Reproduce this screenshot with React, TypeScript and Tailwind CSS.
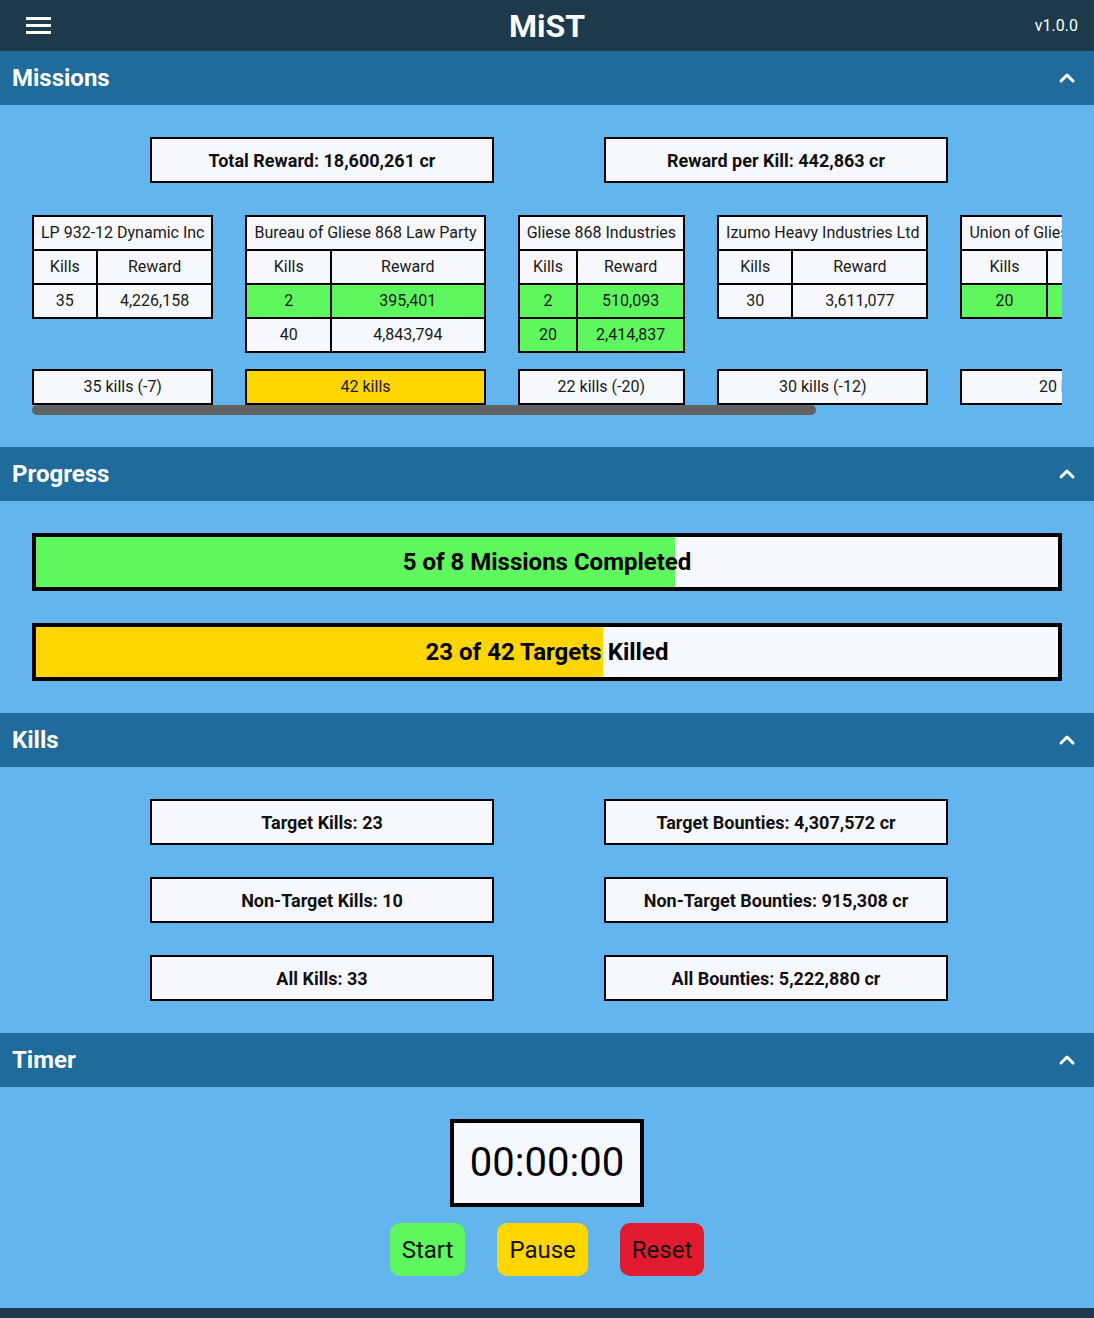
import { ChevronUp } from 'lucide-react';

type Mission = { kills: number; reward: string };
type Faction = { name: string; missions: Mission[] };

const CURRENT_KILLS = 23;
const MAX_KILLS = 42;

const factions: Faction[] = [
  { name: 'LP 932-12 Dynamic Inc', missions: [{ kills: 35, reward: '4,226,158' }] },
  {
    name: 'Bureau of Gliese 868 Law Party',
    missions: [
      { kills: 2, reward: '395,401' },
      { kills: 40, reward: '4,843,794' },
    ],
  },
  {
    name: 'Gliese 868 Industries',
    missions: [
      { kills: 2, reward: '510,093' },
      { kills: 20, reward: '2,414,837' },
    ],
  },
  { name: 'Izumo Heavy Industries Ltd', missions: [{ kills: 30, reward: '3,611,077' }] },
  { name: 'Union of Gliese 868 Progressive', missions: [{ kills: 20, reward: '1,840,112' }] },
  { name: 'Gliese 868 Crimson Inc', missions: [{ kills: 15, reward: '758,789' }] },
];

function SectionHeader({ title }: { title: string }) {
  return (
    <div className="h-[54px] bg-[#1e6b9c] flex items-center justify-between pl-3 pr-[15px]">
      <h2 className="text-[24px] font-bold text-white">{title}</h2>
      <ChevronUp className="w-6 h-6 text-white" strokeWidth={3} />
    </div>
  );
}

function StatBox({ children }: { children: React.ReactNode }) {
  return (
    <div className="w-[344px] h-[46px] border-2 border-black bg-[#f7f8fe] flex items-center justify-center text-[18px] font-bold text-[#111]">
      {children}
    </div>
  );
}

function FactionColumn({ faction }: { faction: Faction }) {
  const total = faction.missions.reduce((s, m) => s + m.kills, 0);
  let running = 0;
  const isMax = total === MAX_KILLS;
  return (
    <div className="flex flex-col shrink-0">
      <table className="border-collapse bg-[#f7f8fe] text-[16px] text-[#1a1a1a] mb-4">
        <thead>
          <tr>
            <th colSpan={2} className="border-2 border-black px-[7px] py-1 font-normal whitespace-nowrap">
              {faction.name}
            </th>
          </tr>
          <tr>
            <th className="border-2 border-black px-2 py-1 font-normal">Kills</th>
            <th className="border-2 border-black px-2 py-1 font-normal">Reward</th>
          </tr>
        </thead>
        <tbody>
          {faction.missions.map((m, i) => {
            running += m.kills;
            const done = running <= CURRENT_KILLS;
            return (
              <tr key={i} className={done ? 'bg-[#5ef75e]' : ''}>
                <td className="border-2 border-black px-2 py-1 text-center">{m.kills}</td>
                <td className="border-2 border-black px-2 py-1 text-center">{m.reward}</td>
              </tr>
            );
          })}
        </tbody>
      </table>
      <div
        className={
          'mt-auto h-9 border-2 border-black flex items-center justify-center text-[16px] text-[#1a1a1a] whitespace-nowrap ' +
          (isMax ? 'bg-[#ffd600]' : 'bg-[#f7f8fe]')
        }
      >
        {isMax ? `${total} kills` : `${total} kills (${total - MAX_KILLS})`}
      </div>
    </div>
  );
}

function ProgressBar({ value, max, label, color }: { value: number; max: number; label: string; color: string }) {
  const pct = (value / max) * 100;
  return (
    <div className="relative h-[58px] border-4 border-black bg-[#f7f8fe]">
      <div className={'h-full ' + color} style={{ width: `${pct}%` }} />
      <div className="absolute inset-0 flex items-center justify-center text-[24px] font-bold text-black">
        {label}
      </div>
    </div>
  );
}

export default function App() {
  return (
    <div className="min-h-screen bg-[#63b5ed] font-['Roboto',sans-serif]">
      {/* Top bar */}
      <nav className="h-[51px] bg-[#1d3a4a] flex items-center justify-between px-[26px] relative">
        <div className="flex flex-col gap-[4px] w-[25px]">
          <span className="h-[3px] bg-white" />
          <span className="h-[3px] bg-white" />
          <span className="h-[3px] bg-white" />
        </div>
        <h1 className="absolute left-1/2 -translate-x-1/2 text-[32px] font-bold text-white">MiST</h1>
        <span className="text-[16px] text-white mr-[-10px]">v1.0.0</span>
      </nav>

      {/* Missions */}
      <SectionHeader title="Missions" />
      <div className="px-8 pt-8 pb-8">
        <div className="flex justify-center gap-[110px] pl-1">
          <StatBox>Total Reward: 18,600,261 cr</StatBox>
          <StatBox>Reward per Kill: 442,863 cr</StatBox>
        </div>
        <div className="mt-8 overflow-x-auto [scrollbar-width:none]">
          <div className="flex gap-8 items-stretch w-max">
            {factions.map((f) => (
              <FactionColumn key={f.name} faction={f} />
            ))}
          </div>
        </div>
        {/* scroll indicator */}
        <div className="h-[10px] w-[784px] rounded-full bg-[#616161]" />
      </div>

      {/* Progress */}
      <SectionHeader title="Progress" />
      <div className="px-8 py-8 flex flex-col gap-8">
        <ProgressBar value={5} max={8} label="5 of 8 Missions Completed" color="bg-[#5ef75e]" />
        <ProgressBar value={23.3} max={42} label="23 of 42 Targets Killed" color="bg-[#ffd600]" />
      </div>

      {/* Kills */}
      <SectionHeader title="Kills" />
      <div className="pr-8 pl-9 py-8 grid grid-cols-[344px_344px] justify-center gap-x-[110px] gap-y-8">
        <StatBox>Target Kills: 23</StatBox>
        <StatBox>Target Bounties: 4,307,572 cr</StatBox>
        <StatBox>Non-Target Kills: 10</StatBox>
        <StatBox>Non-Target Bounties: 915,308 cr</StatBox>
        <StatBox>All Kills: 33</StatBox>
        <StatBox>All Bounties: 5,222,880 cr</StatBox>
      </div>

      {/* Timer */}
      <SectionHeader title="Timer" />
      <div className="pt-8 pb-8 flex flex-col items-center">
        <div className="border-4 border-black bg-[#f7f8fe] px-4 py-4 text-[40px] leading-[48px] text-black">
          00:00:00
        </div>
        <div className="mt-4 flex gap-8">
          <button className="h-[53px] px-3 rounded-[10px] bg-[#5ef75e] text-[24px] text-[#111]">Start</button>
          <button className="h-[53px] px-3 rounded-[10px] bg-[#ffd600] text-[24px] text-[#111]">Pause</button>
          <button className="h-[53px] px-3 rounded-[10px] bg-[#e11a2f] text-[24px] text-[#111]">Reset</button>
        </div>
      </div>
      <footer className="h-10 bg-[#1d3a4a]" />
    </div>
  );
}
